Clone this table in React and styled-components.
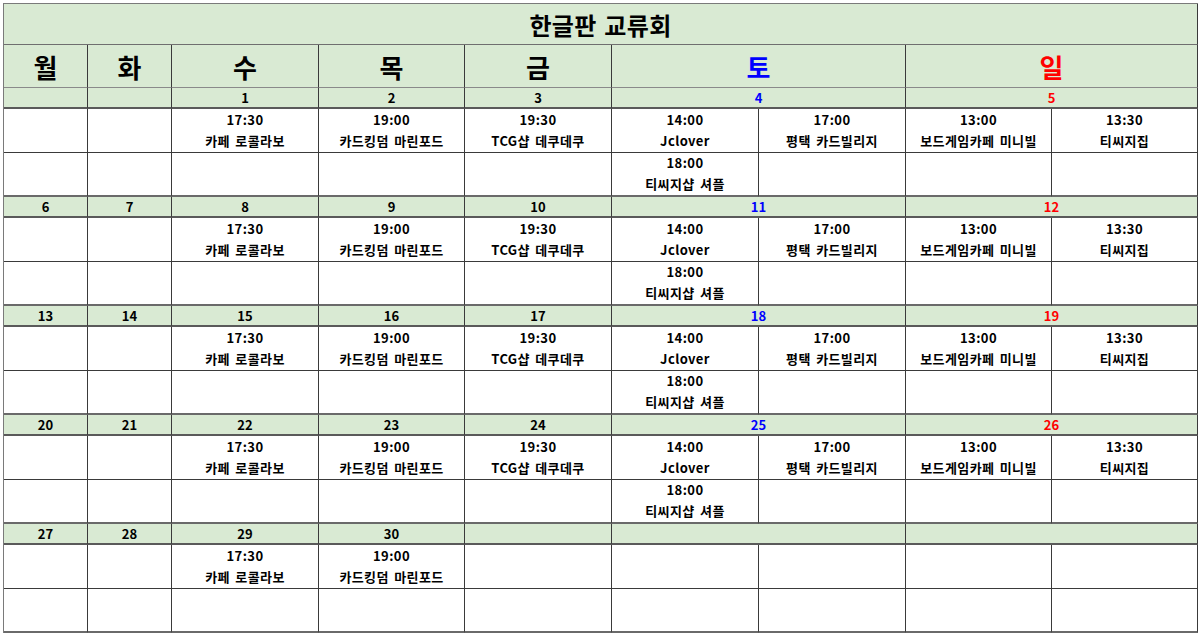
import React from "react";
import styled, { createGlobalStyle } from "styled-components";

const Global = createGlobalStyle`
  html, body { margin: 0; padding: 0; background: #ffffff; }
  body { font-family: "Noto Sans CJK KR", "Noto Sans", sans-serif; color: #000; }
`;

const GREEN = "#d9ead3";
const LINE = "#3a3a3a";

const Page = styled.div`
  padding: 3px 0 0 3px;
`;

const Sheet = styled.div`
  display: grid;
  width: 1194px;
  grid-template-columns: 84px 84px 147px 146px 147px 147px 147px 146px 146px;
  grid-template-rows: 41px 43px repeat(5, 21px 44px 44px);
  border-top: 1px solid #7a7a7a;
  border-left: 1px solid #7a7a7a;
`;

const Cell = styled.div`
  box-sizing: border-box;
  grid-column: span ${(p) => p.$span || 1};
  border-right: 1px solid ${LINE};
  border-bottom: 1px solid ${LINE};
  display: flex;
  align-items: center;
  justify-content: center;
  text-align: center;
`;

const TitleCell = styled(Cell)`
  background: ${GREEN};
  font-size: 24px;
  font-weight: 700;
  letter-spacing: 0.3px;
  word-spacing: 2px;
  border-bottom-color: #6f6f6f;
  padding-top: 1px;
`;

const HeadCell = styled(Cell)`
  background: ${GREEN};
  font-size: 26px;
  font-weight: 700;
  color: ${(p) => p.$color || "#000"};
  border-bottom-color: #8a8a8a;
`;

const DateCell = styled(Cell)`
  background: ${GREEN};
  font-size: 13px;
  font-weight: 700;
  color: ${(p) => p.$color || "#000"};
  border-bottom: 2px solid #5a5a5a;
  line-height: 1;
`;

const EventCell = styled(Cell)`
  flex-direction: column;
  font-size: 13px;
  font-weight: 700;
  letter-spacing: 0.4px;
  word-spacing: 2px;
  line-height: 21px;
  padding-bottom: 2px;
  border-bottom-color: ${(p) => (p.$last ? "#6a6a6a" : LINE)};
  border-bottom-width: ${(p) => (p.$last ? "2px" : "1px")};
`;

const Line = styled.span`
  display: block;
  white-space: nowrap;
`;

const BLUE = "#0000ff";
const RED = "#ff0000";

const heads = [
  { t: "월" },
  { t: "화" },
  { t: "수" },
  { t: "목" },
  { t: "금" },
  { t: "토", span: 2, color: BLUE },
  { t: "일", span: 2, color: RED },
];

const WED = ["17:30", "카페 로콜라보"];
const THU = ["19:00", "카드킹덤 마린포드"];
const FRI = ["19:30", "TCG샵 데쿠데쿠"];
const SAT1 = ["14:00", "Jclover"];
const SAT2 = ["17:00", "평택 카드빌리지"];
const SAT3 = ["18:00", "티씨지샵 셔플"];
const SUN1 = ["13:00", "보드게임카페 미니빌"];
const SUN2 = ["13:30", "티씨지집"];

const fullA = [null, null, WED, THU, FRI, SAT1, SAT2, SUN1, SUN2];
const fullB = [null, null, null, null, null, SAT3, null, null, null];

const weeks = [
  { dates: ["", "", 1, 2, 3, 4, 5], a: fullA, b: fullB },
  { dates: [6, 7, 8, 9, 10, 11, 12], a: fullA, b: fullB },
  { dates: [13, 14, 15, 16, 17, 18, 19], a: fullA, b: fullB },
  { dates: [20, 21, 22, 23, 24, 25, 26], a: fullA, b: fullB },
  {
    dates: [27, 28, 29, 30, "", "", ""],
    a: [null, null, WED, THU, null, null, null, null, null],
    b: [null, null, null, null, null, null, null, null, null],
  },
];

function Event({ ev, last }) {
  return (
    <EventCell $last={last}>
      {ev && (
        <>
          <Line>{ev[0]}</Line>
          <Line>{ev[1]}</Line>
        </>
      )}
    </EventCell>
  );
}

export default function App() {
  return (
    <Page>
      <Global />
      <Sheet>
        <TitleCell $span={9}>한글판 교류회</TitleCell>
        {heads.map((h) => (
          <HeadCell key={h.t} $span={h.span} $color={h.color}>
            {h.t}
          </HeadCell>
        ))}
        {weeks.map((w, wi) => (
          <React.Fragment key={wi}>
            {w.dates.map((d, i) => (
              <DateCell
                key={"d" + i}
                $span={i >= 5 ? 2 : 1}
                $color={i === 5 ? BLUE : i === 6 ? RED : undefined}
              >
                {d}
              </DateCell>
            ))}
            {w.a.map((ev, i) => (
              <Event key={"a" + i} ev={ev} />
            ))}
            {w.b.map((ev, i) => (
              <Event key={"b" + i} ev={ev} last />
            ))}
          </React.Fragment>
        ))}
      </Sheet>
    </Page>
  );
}
